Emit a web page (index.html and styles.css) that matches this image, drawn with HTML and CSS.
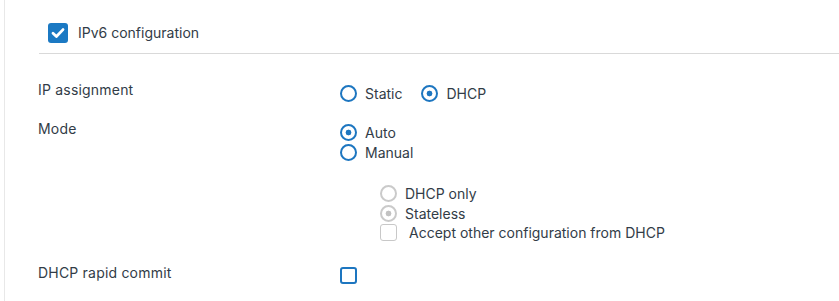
FILE: index.html
```html
<!DOCTYPE html>
<html lang="en">
<head>
    <meta charset="UTF-8">
    <title>IPv6 configuration</title>
    <link rel="stylesheet" href="styles.css">
</head>
<body>
    <div class="panel">
        <div class="section-head">
            <span class="check check-on">
                <svg width="16" height="16" viewBox="0 0 16 16"><path d="M3 8.3 L6.4 11.5 L13 4.6" fill="none" stroke="#fff" stroke-width="2.8" stroke-linecap="round" stroke-linejoin="round"/></svg>
            </span>
            <span class="head-title">IPv6 configuration</span>
        </div>

        <div class="row row-first">
            <div class="label">IP assignment</div>
            <div class="options inline">
                <label class="opt"><span class="radio"></span>Static</label>
                <label class="opt"><span class="radio radio-on"></span>DHCP</label>
            </div>
        </div>

        <div class="row">
            <div class="label">Mode</div>
            <div class="options">
                <label class="opt"><span class="radio radio-on"></span>Auto</label>
                <label class="opt"><span class="radio"></span>Manual</label>
                <div class="sub">
                    <label class="opt"><span class="radio radio-off"></span>DHCP only</label>
                    <label class="opt"><span class="radio radio-off radio-on"></span>Stateless</label>
                    <label class="opt opt-box"><span class="box box-off"></span>Accept other configuration from DHCP</label>
                </div>
            </div>
        </div>

        <div class="row row-last">
            <div class="label">DHCP rapid commit</div>
            <div class="options">
                <label class="opt"><span class="box"></span></label>
            </div>
        </div>
    </div>
</body>
</html>
```

FILE: styles.css
```css
body {
    margin: 0;
    font-family: Inter, 'Noto Sans', sans-serif;
    font-size: 14px;
    color: #323c47;
    background: #fff;
}
.panel {
    margin-left: 4px;
    height: 301px;
    border-left: 1px solid #e8e8e8;
}
.section-head {
    margin-left: 34px;
    padding: 23px 0 10px 9px;
    display: flex;
    align-items: center;
    border-bottom: 1px solid #d9d9d9;
}
.check {
    width: 20px;
    height: 20px;
    border-radius: 3px;
    display: flex;
    align-items: center;
    justify-content: center;
}
.check-on {
    background: #1b79c3;
}
.head-title {
    margin-left: 10px;
    line-height: 20px;
}
.row {
    display: grid;
    grid-template-columns: 302px 1fr;
    margin-left: 33px;
    margin-top: 14px;
}
.row-first {
    margin-top: 24px;
}
.row-last {
    margin-top: 18px;
}
.label {
    padding-top: 2px;
    line-height: 20px;
    letter-spacing: 0.2px;
}
.options {
    padding-top: 5px;
}
.options.inline {
    display: flex;
    gap: 19px;
}
.opt {
    display: flex;
    align-items: center;
    height: 20px;
    gap: 8px;
}
.opt-box {
    gap: 12px;
}
.radio {
    box-sizing: border-box;
    width: 17px;
    height: 17px;
    border: 2.5px solid #1d76c0;
    border-radius: 50%;
}
.radio-on {
    background: radial-gradient(circle, #1d76c0 0 2.6px, transparent 3.2px);
}
.radio-off {
    border: 2px solid #cacaca;
}
.radio-off.radio-on {
    background: radial-gradient(circle, #c2c2c2 0 2.6px, transparent 3.2px);
}
.sub {
    margin: 22px 0 0 40px;
}
.sub .opt {
    height: 19.5px;
}
.box {
    box-sizing: border-box;
    width: 17px;
    height: 17px;
    border: 2px solid #1d76c0;
    border-radius: 3px;
}
.box-off {
    border: 1.5px solid #c8c8c8;
}
```
